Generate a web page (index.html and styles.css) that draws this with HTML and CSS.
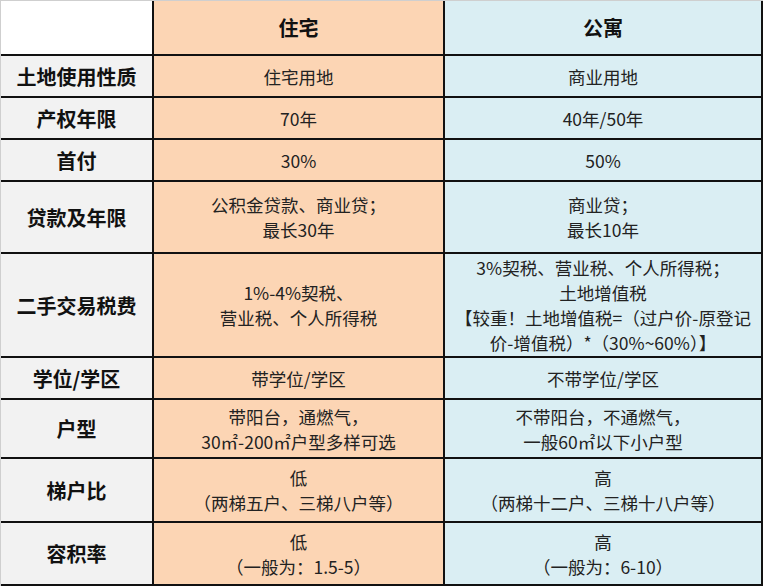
FILE: index.html
```html
<!DOCTYPE html>
<html lang="zh-CN">
<head>
<meta charset="utf-8">
<title>住宅与公寓对比</title>
<link rel="stylesheet" href="styles.css">
</head>
<body>
<div class="table">
  <div class="cell label blank"></div>
  <div class="cell head res">住宅</div>
  <div class="cell head apt">公寓</div>

  <div class="cell label">土地使用性质</div>
  <div class="cell res">住宅用地</div>
  <div class="cell apt">商业用地</div>

  <div class="cell label">产权年限</div>
  <div class="cell res">70年</div>
  <div class="cell apt">40年/50年</div>

  <div class="cell label">首付</div>
  <div class="cell res">30%</div>
  <div class="cell apt">50%</div>

  <div class="cell label">贷款及年限</div>
  <div class="cell res">公积金贷款、商业贷；<br>最长30年</div>
  <div class="cell apt">商业贷；<br>最长10年</div>

  <div class="cell label">二手交易税费</div>
  <div class="cell res">1%-4%契税、<br>营业税、个人所得税</div>
  <div class="cell apt">3%契税、营业税、个人所得税；<br>土地增值税<br>【较重！土地增值税=（过户价-原登记<br>价-增值税）*（30%~60%）】</div>

  <div class="cell label">学位/学区</div>
  <div class="cell res">带学位/学区</div>
  <div class="cell apt">不带学位/学区</div>

  <div class="cell label">户型</div>
  <div class="cell res">带阳台，通燃气，<br>30㎡-200㎡户型多样可选</div>
  <div class="cell apt">不带阳台，不通燃气，<br>一般60㎡以下小户型</div>

  <div class="cell label">梯户比</div>
  <div class="cell res">低<br>（两梯五户、三梯八户等）</div>
  <div class="cell apt">高<br>（两梯十二户、三梯十八户等）</div>

  <div class="cell label">容积率</div>
  <div class="cell res">低<br>（一般为：1.5-5）</div>
  <div class="cell apt">高<br>（一般为：6-10）</div>
</div>
</body>
</html>
```

FILE: styles.css
```css
html, body {
  margin: 0;
  padding: 0;
  background: #ffffff;
}

body {
  font-family: "Noto Sans CJK SC", "Noto Sans", sans-serif;
  width: 763px;
  height: 586px;
  overflow: hidden;
}

.table {
  display: grid;
  grid-template-columns: 151px 289px 316px;
  grid-template-rows: 53px 40px 40px 40px 70px 102px 40px 57px 62px 61px;
  gap: 2px;
  background: #111111;
  border-top: 1px solid #cfcfcf;
  border-left: 1px solid #cfcfcf;
  padding: 0 2px 2px 0;
  width: 760px;
  box-sizing: content-box;
}

.cell {
  display: flex;
  align-items: center;
  justify-content: center;
  text-align: center;
  font-size: 17.5px;
  line-height: 25px;
  color: #222222;
  white-space: nowrap;
}

.label {
  background: #f2f2f2;
  font-weight: 700;
  font-size: 20px;
  color: #111111;
}

.blank {
  background: #ffffff;
}

.head {
  font-weight: 700;
  font-size: 20px;
  color: #111111;
}

.res {
  background: #fcd5b4;
}

.apt {
  background: #daeef3;
}
```
